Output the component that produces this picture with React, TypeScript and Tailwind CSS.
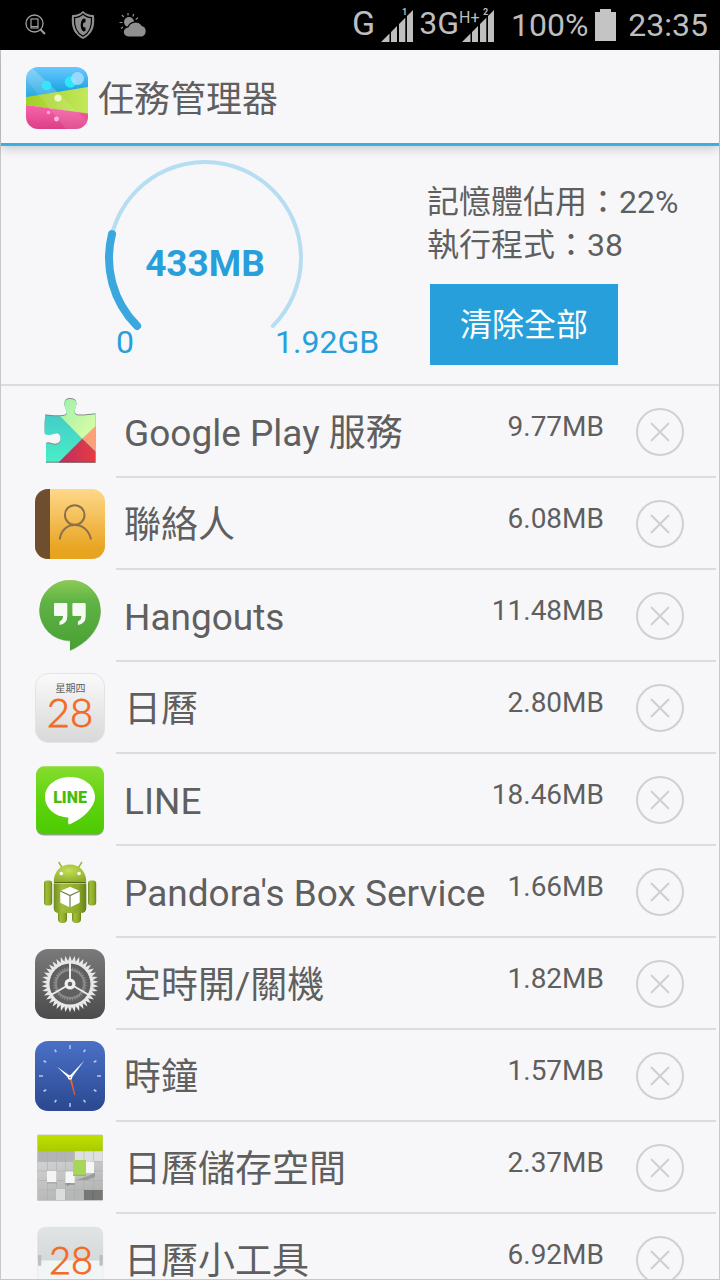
import type { ReactNode } from "react";

const PhoneSearchIcon = () => (
  <svg viewBox="0 0 22 22" className="w-[22px] h-[22px]" fill="none" stroke="#a0a0a0">
    <circle cx="9.5" cy="9.5" r="8.5" strokeWidth="1.3" />
    <rect x="6" y="5" width="7" height="9" strokeWidth="1.2" />
    <path d="M6 12.5h7" strokeWidth="1" />
    <path d="M15.5 15.5l4.500 4.500" strokeWidth="2" />
  </svg>
);

const ShieldIcon = () => (
  <svg viewBox="0 0 24 30" className="w-6 h-[30px]">
    <path d="M12 1.500C9 4.500 5 5.500 1.500 5.500C0.500 15 2 24 12 28.500C22 24 23.500 15 22.500 5.500C19 5.500 15 4.500 12 1.500Z" fill="#8f8f8f" stroke="#a5a5a5" strokeWidth="0.8" />
    <path d="M12 4C9.500 6.500 6.500 7.500 3.500 7.600C3 16 4.500 22.500 12 26.300C19.500 22.500 21 16 20.500 7.600C17.500 7.500 14.500 6.500 12 4Z" fill="none" stroke="#000" strokeWidth="1.2" />
    <path d="M14.500 9l-2-0.500C8.800 10 8.800 20 12.500 21.500l2-0.500v-3.400l-2-0.400c-0.700-1.200-0.700-3.500 0-4.500l2-0.500z" fill="#000" />
  </svg>
);

const WeatherIcon = () => (
  <svg viewBox="0 0 28 24" className="w-7 h-6">
    <g stroke="#8f8f8f" strokeWidth="1.2">
      <path d="M9 0v2.500M3 2l1.800 2.200M0.500 9.500h3M14.800 1l-1 2.500M19 4.800l-2.300 1.600M2 15.500l2-1.500" />
    </g>
    <circle cx="10" cy="9" r="5" fill="#8f8f8f" />
    <path d="M9.500 24a5 5 0 0 1-0.500-10a8 8 0 0 1 14-1.500a6 6 0 0 1 0 11.500z" fill="#8f8f8f" stroke="#000" strokeWidth="1.200" />
  </svg>
);

const SignalBars = () => (
  <path d="M0 32L8.500 23.500V32zM10 22L16 16V32H10zM18 14L24.300 7.700V32H18zM26 6L32 0V32H26z" fill="#bebebe" />
);

const StatusBar = () => {
  return (
    <div className="bg-black w-full h-[50px] shrink-0 flex justify-between items-center pl-[25px] pr-3 text-[#bebebe]">
      <div className="flex items-center gap-6">
        <PhoneSearchIcon />
        <ShieldIcon />
        <WeatherIcon />
      </div>

      <div className="flex items-center">
        <p className="text-[34px] leading-[34px] pb-1">G</p>
        <svg viewBox="0 0 34 36" className="w-[34px] h-9 ml-[6px]">
          <g transform="translate(0 3)">
            <SignalBars />
            <text x="21" y="5" fontSize="9" fontWeight="bold" fill="#bebebe">1</text>
          </g>
        </svg>
        <p className="text-[32px] leading-[34px] pb-1 ml-1">3G</p>
        <svg viewBox="0 0 36 36" className="w-9 h-9">
          <text x="0" y="16" fontSize="16" fill="#bebebe">H+</text>
          <g transform="translate(3 3)">
            <SignalBars />
            <text x="21" y="5" fontSize="9" fontWeight="bold" fill="#bebebe">2</text>
          </g>
        </svg>
        <p className="text-[32px] leading-[50px] ml-4">100%</p>
        <svg viewBox="0 0 22 32" className="w-[22px] h-8 ml-[7px]">
          <path d="M5 0h11v3h5v29H0V3h5z" fill="#c4c4c4" />
        </svg>
        <p className="text-[32px] leading-[50px] ml-[11px]">23:35</p>
      </div>
    </div>
  );
};

const Header = () => {
  return (
    <div className="relative shrink-0 flex items-center gap-[10px] h-24 pt-[2px] pl-[25px] border-b-[3px] border-[#3ab0e2] shadow-[0_3px_10px_rgba(0,0,0,0.18)]">
      <svg viewBox="0 0 62 62" className="w-[62px] h-[62px]">
        <defs>
          <clipPath id="logoClip"><rect width="62" height="62" rx="12" /></clipPath>
          <linearGradient id="logoBlue" x2="0" y2="1"><stop stopColor="#6bc8ff" /><stop offset="1" stopColor="#0099d8" /></linearGradient>
          <linearGradient id="logoGreen" x2="1" y2="0"><stop stopColor="#a3cf26" /><stop offset="1" stopColor="#c3e85c" /></linearGradient>
          <linearGradient id="logoPink" x2="0" y2="1"><stop stopColor="#f765ac" /><stop offset="1" stopColor="#dd3f85" /></linearGradient>
        </defs>
        <g clipPath="url(#logoClip)">
          <rect width="62" height="32" fill="url(#logoBlue)" />
          <path d="M0 30L62 20V47L0 38z" fill="url(#logoGreen)" />
          <path d="M0 38L62 46.500V62H0z" fill="url(#logoPink)" />
          <path d="M0 0H5L32 25L0 30z" fill="#fff" opacity="0.14" />
          <path d="M5 0L62 55V62H40L0 12V0z" fill="#fff" opacity="0.1" />
          <circle cx="20.500" cy="18.500" r="4.800" fill="#36e4fb" />
          <circle cx="44.500" cy="15" r="5.800" fill="#2ee6fb" />
          <circle cx="51.500" cy="11.500" r="6.500" fill="#b3e2ff" opacity="0.75" />
          <circle cx="32" cy="31" r="3.600" fill="#eef9c8" />
          <circle cx="22.500" cy="45.500" r="1.700" fill="#ffa9d3" />
          <circle cx="30.500" cy="52" r="2.400" fill="#ffb9da" />
        </g>
      </svg>
      <h1 className="text-[36px] leading-[48px] pt-1">任務管理器</h1>
    </div>
  );
};

const ARC = "M38.100 176.900A96 96 0 1 1 173.900 176.900";

const MemoryGauge = ({ percent }: { percent: number }) => (
  <svg viewBox="0 0 284 214" className="w-[284px] h-[214px] shrink-0" fill="none" strokeLinecap="round">
    <path d={ARC} stroke="#b6ddf1" strokeWidth="4" />
    <path d={ARC} pathLength="100" strokeDasharray={`${percent} 200`} stroke="#3aa8de" strokeWidth="8" />
    <g fill="#279fda" stroke="none">
      <text x="106" y="127" textAnchor="middle" fontSize="37" fontWeight="bold">433MB</text>
      <text x="17" y="204" fontSize="32">0</text>
      <text x="176" y="204" fontSize="32">1.92GB</text>
    </g>
  </svg>
);

const Summary = () => {
  return (
    <div className="shrink-0 flex items-start gap-11 h-60 pl-[98px] border-b-2 border-[#dcdcdc]">
      <div className="pt-[3px]">
        <MemoryGauge percent={22} />
      </div>
      <div className="pt-[35px]">
        <p className="text-[32px] leading-[43px] whitespace-nowrap">記憶體佔用：22%</p>
        <p className="text-[32px] leading-[43px] whitespace-nowrap">執行程式：38</p>
        <button className="mt-[17px] ml-[3px] h-[81px] px-[30px] bg-[#279fda] text-white text-[32px]">
          清除全部
        </button>
      </div>
    </div>
  );
};

const AppIcon = ({ children }: { children: ReactNode }) => (
  <svg viewBox="0 0 70 70" className="w-[70px] h-[70px] shrink-0 overflow-visible">
    {children}
  </svg>
);

const PlayServicesIcon = () => (
  <AppIcon>
    <defs>
      <clipPath id="puzzle">
        <path d="M10.300 18.300C18 19.600 24 19.500 28.500 18.900C32.500 18.300 32.700 15.500 30.700 12C28.700 8 28.500 2 35 2C41.700 2 42.500 7 40.300 11.500C38.600 15.500 39.500 18 43.500 18.500C49 18.800 55 17.700 60.500 17.200V65.500H11V48C11 46.300 13 45.800 16.500 47C22 48.900 25.700 46.500 25.700 42C25.700 37.300 22.500 35.300 18.500 37C15.500 38.300 12 38 9.800 37.200C9.300 30 9.700 24 10.300 18.300z" />
      </clipPath>
      <linearGradient id="playTeal" x2="0" y2="1"><stop stopColor="#43bfc9" /><stop offset="1" stopColor="#48f2c7" /></linearGradient>
      <linearGradient id="playGreen" x2="1" y2="1"><stop stopColor="#9ef0a8" /><stop offset="1" stopColor="#e0ffa5" /></linearGradient>
      <linearGradient id="playRed"><stop stopColor="#b92f62" /><stop offset="1" stopColor="#e83c41" /></linearGradient>
    </defs>
    <g transform="translate(0 -1)" opacity="0.75"><rect width="70" height="66" fill="#6b5b5b" clipPath="url(#puzzle)" /></g>
    <g clipPath="url(#puzzle)">
      <rect width="70" height="70" fill="url(#playTeal)" />
      <path d="M25 19V0H61V29.300L47.300 41.700z" fill="url(#playGreen)" />
      <path d="M61 28.500V55L47.300 41.700z" fill="#ffa178" />
      <path d="M47.300 41.700L61 55V66H23z" fill="url(#playRed)" />
      <path d="M11 65.300H61" stroke="#6d3548" strokeWidth="1" />
    </g>
  </AppIcon>
);

const ContactsIcon = () => (
  <AppIcon>
    <defs>
      <clipPath id="contactsClip"><rect width="70" height="70" rx="13" /></clipPath>
      <linearGradient id="contactsBg" x2="0" y2="1"><stop stopColor="#ffd88a" /><stop offset="0.85" stopColor="#e8a522" /><stop offset="1" stopColor="#e6a31e" /></linearGradient>
    </defs>
    <g clipPath="url(#contactsClip)">
      <rect width="70" height="70" fill="url(#contactsBg)" />
      <rect width="15" height="70" fill="#6d4f30" />
    </g>
    <g fill="none" stroke="#8b704b" strokeWidth="2">
      <circle cx="39.700" cy="26" r="9.800" />
      <path d="M24.700 50.500C26 41 32 36 39.700 36C47.500 36 54 41 56 50.500" />
    </g>
  </AppIcon>
);

const HangoutsIcon = () => (
  <AppIcon>
    <defs>
      <linearGradient id="hangoutsBg" x2="0" y2="1"><stop stopColor="#8ccb55" /><stop offset="0.3" stopColor="#60b346" /><stop offset="1" stopColor="#47a033" /></linearGradient>
    </defs>
    <path d="M35 -1A31 31 0 0 1 65.800 29.500C65.800 50 50 64 35 70V60.500A31 31 0 0 1 4.200 29.500A31 31 0 0 1 35 -1z" fill="#88a27c" opacity="0.5" />
    <path d="M35 -1A30.700 30.500 0 0 1 65.700 29.500C65.700 49 50 63 35 69.500V59.800A30.700 30.500 0 0 1 4.300 29.500A30.700 30.500 0 0 1 35 -1z" fill="url(#hangoutsBg)" />
    <path d="M20 22H31.300Q32.300 22 32.300 23V35Q32.300 43 24.500 44V40.500Q28 39 28 35H20Q19 35 19 34V23Q19 22 20 22zM38.400 22H49.700Q50.700 22 50.700 23V35Q50.700 43 42.900 44V40.500Q46.400 39 46.400 35H38.400Q37.400 35 37.400 34V23Q37.400 22 38.400 22z" fill="#f7faf4" />
  </AppIcon>
);

const CalendarIcon = () => (
  <AppIcon>
    <defs>
      <linearGradient id="calendarBg" x2="0" y2="1"><stop stopColor="#fafafa" /><stop offset="1" stopColor="#d8d8d8" /></linearGradient>
    </defs>
    <rect x="0.500" y="0.500" width="69" height="69" rx="13" fill="url(#calendarBg)" stroke="#e3e3e3" />
    <text x="35.500" y="19" textAnchor="middle" fontSize="10" fill="#606060">星期四</text>
    <text x="35" y="54" textAnchor="middle" fontSize="40" fontWeight="300" fontFamily="Lato" fill="#f26a25" stroke="#f26a25" strokeWidth="0.800">28</text>
  </AppIcon>
);

const LineIcon = () => (
  <AppIcon>
    <defs>
      <linearGradient id="lineBg" x2="0" y2="1"><stop stopColor="#86dd2e" /><stop offset="0.5" stopColor="#5fd30f" /><stop offset="1" stopColor="#4ccb02" /></linearGradient>
    </defs>
    <rect x="1" y="2.500" width="68" height="68" rx="8" fill="#777" opacity="0.7" />
    <rect x="1" y="1.300" width="68" height="68" rx="8" fill="url(#lineBg)" />
    <path d="M35 12C49 12 60 20.500 60 32C60 43 46 55 34.500 59.300C32.500 59.800 33.500 55 33.300 52.500C20 52 10 43 10 32C10 20.500 21 12 35 12z" fill="#fff" />
    <text x="35" y="37.500" textAnchor="middle" fontSize="16" fontWeight="900" fill="#45bd0c">LINE</text>
  </AppIcon>
);

const AndroidIcon = () => (
  <AppIcon>
    <defs>
      <radialGradient id="androidHead" cx="0.45" cy="0.35" r="0.75"><stop stopColor="#c5df55" /><stop offset="1" stopColor="#8cab28" /></radialGradient>
      <linearGradient id="androidBody"><stop stopColor="#718d20" /><stop offset="0.25" stopColor="#a1bd3a" /><stop offset="0.75" stopColor="#8ca928" /><stop offset="1" stopColor="#66801a" /></linearGradient>
    </defs>
    <path d="M23.700 5L27 10.500M47 5L43.500 10.500" stroke="#9cb646" strokeWidth="1.500" />
    <path d="M18.700 24.500C19 14 26 7.500 35 7.500C44 7.500 51 14 51.300 24.500z" fill="url(#androidHead)" />
    <circle cx="26.300" cy="16.500" r="1.800" fill="#fff" />
    <circle cx="44" cy="16.500" r="1.800" fill="#fff" />
    <rect x="9" y="23.500" width="8.200" height="25" rx="3" fill="url(#androidBody)" />
    <rect x="53" y="23.500" width="8.200" height="25" rx="3" fill="url(#androidBody)" />
    <rect x="23" y="50" width="9" height="16" rx="4" fill="url(#androidBody)" />
    <rect x="37" y="50" width="9" height="16" rx="4" fill="url(#androidBody)" />
    <path d="M18.700 26.500H51.300V51Q51.300 56 46 56H24Q18.700 56 18.700 51z" fill="url(#androidBody)" />
    <path d="M19 25.300H51" stroke="#54691a" strokeWidth="1.500" />
    <path d="M35 29.700L44.700 34V45.700L35 50.500L25.300 45.700V34z" fill="#fff" />
    <path d="M25.300 34L35 38.500L44.700 34M35 38.500V50.500" stroke="#6f7f48" strokeWidth="1.200" fill="none" />
  </AppIcon>
);

const gearPoints = (teeth: number, inner: number, outer: number) =>
  Array.from({ length: teeth * 2 }, (_, i) => {
    const r = i % 2 ? inner : outer;
    const a = (Math.PI * i) / teeth - Math.PI / 2;
    return `${35 + r * Math.cos(a)},${35 + r * Math.sin(a)}`;
  }).join(" ");

const GearIcon = () => (
  <AppIcon>
    <defs>
      <linearGradient id="gearBg" x2="0" y2="1"><stop stopColor="#7a7a7a" /><stop offset="1" stopColor="#4b4b4b" /></linearGradient>
    </defs>
    <rect width="70" height="70" rx="13" fill="url(#gearBg)" />
    <polygon points={gearPoints(38, 23, 28.5)} fill="#e8e8e8" />
    <circle cx="35" cy="35" r="20.500" fill="#5f5f5f" />
    <polygon points={gearPoints(38, 14.5, 17.5)} fill="#8a8a8a" />
    <circle cx="35" cy="35" r="13" fill="#606060" />
    <path d="M35 35V13M35 35L16 46M35 35L54 46" stroke="#ececec" strokeWidth="2" />
    <circle cx="35" cy="35" r="5.500" fill="#f0f0f0" />
    <circle cx="35" cy="35" r="2.300" fill="#666" />
  </AppIcon>
);

const ClockIcon = () => (
  <AppIcon>
    <defs>
      <linearGradient id="clockBg" x2="0" y2="1"><stop stopColor="#4a70c6" /><stop offset="1" stopColor="#2b4890" /></linearGradient>
    </defs>
    <rect width="70" height="70" rx="13" fill="url(#clockBg)" />
    {Array.from({ length: 12 }, (_, i) => (
      <path
        key={i}
        d={i % 3 ? "M35 4.500V7.500" : "M35 4V8"}
        transform={`rotate(${i * 30} 35 35)`}
        stroke="#b5c7ee"
        strokeWidth={i % 3 ? 1.7 : 1.5}
      />
    ))}
    <path d="M34.300 36.500L39.200 54L40.200 53.700L36.300 36z" fill="#f0622b" />
    <path d="M22 25.700L34 37.500L36 35.500z" fill="#fff" />
    <path d="M49.300 19.500L33.800 35.700L36.200 37.500z" fill="#fff" />
    <circle cx="35" cy="36.500" r="2.200" fill="#fff" />
    <circle cx="35" cy="36.500" r="0.800" fill="#777" />
  </AppIcon>
);

const CalendarStorageIcon = () => (
  <AppIcon>
    <defs>
      <linearGradient id="storageBg" x2="0.300" y2="1"><stop stopColor="#e2e2e2" /><stop offset="1" stopColor="#b5b7b6" /></linearGradient>
      <linearGradient id="storageTop" x2="0" y2="1"><stop stopColor="#c0e000" /><stop offset="1" stopColor="#a9cb00" /></linearGradient>
    </defs>
    <rect x="2" y="1.500" width="66" height="66.500" rx="1.500" fill="#c9c9c9" />
    <rect x="2.700" y="2" width="65" height="65" rx="1" fill="url(#storageBg)" />
    <rect x="2.700" y="18" width="37" height="10.500" fill="#b2b4b5" />
    <rect x="39.500" y="18" width="28" height="10.500" fill="#dedfe0" />
    <path d="M12.500 18V67M21.500 18V67M30.500 18V67M39.500 18V67M49 18V67M58.500 18V67M2.700 28.500H67.700M2.700 38H67.700M2.700 47.500H67.700M2.700 57H67.700" stroke="#a9abab" strokeWidth="0.500" />
    <rect x="49" y="57" width="18.700" height="10" fill="#767876" />
    <path d="M58 57v10" stroke="#666" strokeWidth="0.700" />
    <path d="M50 44L60 40V44L52 47H40L32 54V50z" fill="#777" opacity="0.5" />
    <rect x="12" y="39" width="10" height="11.500" fill="#999" opacity="0.6" />
    <rect x="12" y="38" width="9.500" height="11" fill="#f4f4f4" />
    <rect x="30" y="39" width="10" height="13" fill="#8a8a8a" opacity="0.6" />
    <rect x="30.300" y="38.500" width="9.500" height="11.500" fill="#f6f6f6" />
    <rect x="51" y="28.500" width="8" height="11.500" fill="#f6f6f6" />
    <rect x="21" y="56" width="9" height="11" fill="#dcdcdc" />
    <rect x="38" y="27" width="13" height="15.500" fill="#a9d65a" />
    <path d="M38 42.300H51" stroke="#8ac800" strokeWidth="1" />
    <rect x="2.700" y="2" width="65" height="16.300" rx="1" fill="url(#storageTop)" />
  </AppIcon>
);

const CalendarWidgetIcon = () => (
  <AppIcon>
    <defs>
      <linearGradient id="widgetTop" x2="0" y2="1"><stop stopColor="#e1e4e5" /><stop offset="1" stopColor="#d6d9da" /></linearGradient>
    </defs>
    <rect x="2.500" y="2" width="65.500" height="66" rx="8" fill="#f1f5f6" stroke="#e2e4e5" strokeWidth="0.500" />
    <path d="M2.500 35.500V10Q2.500 2 10.500 2H60Q68 2 68 10V35.500z" fill="url(#widgetTop)" />
    <rect x="3" y="30" width="3.300" height="10.700" fill="#bbbfc0" />
    <rect x="64.500" y="30" width="3.300" height="10.700" fill="#bbbfc0" />
    <text x="36" y="49" textAnchor="middle" fontSize="38" fontWeight="300" fontFamily="Lato" fill="#f26a25" stroke="#f26a25" strokeWidth="0.800">28</text>
  </AppIcon>
);

const apps = [
  { name: "Google Play 服務", size: "9.77MB", icon: <PlayServicesIcon /> },
  { name: "聯絡人", size: "6.08MB", icon: <ContactsIcon /> },
  { name: "Hangouts", size: "11.48MB", icon: <HangoutsIcon /> },
  { name: "日曆", size: "2.80MB", icon: <CalendarIcon /> },
  { name: "LINE", size: "18.46MB", icon: <LineIcon /> },
  { name: "Pandora's Box Service", size: "1.66MB", icon: <AndroidIcon /> },
  { name: "定時開/關機", size: "1.82MB", icon: <GearIcon /> },
  { name: "時鐘", size: "1.57MB", icon: <ClockIcon /> },
  { name: "日曆儲存空間", size: "2.37MB", icon: <CalendarStorageIcon /> },
  { name: "日曆小工具", size: "6.92MB", icon: <CalendarWidgetIcon /> },
];

const App = () => {
  return (
    <div
      lang="zh-Hant"
      className="h-screen w-full flex flex-col overflow-hidden bg-[#f7f7fa] text-[#5f5f5f] font-['Roboto','Noto_Sans_CJK_TC',sans-serif]"
    >
      <StatusBar />
      <div className="flex-1 min-h-0 flex flex-col border-x border-b border-[#c8c8c8]">
        <Header />
        <Summary />
        <ul className="flex-1 min-h-0 overflow-y-auto [scrollbar-width:none]">
          {apps.map((app) => (
            <li key={app.name} className="flex items-center gap-[11px] h-[92px] pl-[34px] pr-[3px]">
              {app.icon}
              <div className="flex-1 min-w-0 h-full flex items-center pt-[2px] pl-2 pr-8 border-b-2 border-[#dcdcdc]">
                <p className="flex-1 min-w-0 whitespace-nowrap text-[37px] leading-[48px] pt-1">{app.name}</p>
                <p className="text-[28px] leading-[32px] pb-[10px]">{app.size}</p>
                <button
                  aria-label={`關閉 ${app.name}`}
                  className="ml-8 w-12 h-12 shrink-0 rounded-full border-2 border-[#d0d0d0] flex items-center justify-center"
                >
                  <svg viewBox="0 0 20 20" className="w-5 h-5" stroke="#cfcfcf" strokeWidth="2">
                    <path d="M1 1L19 19M19 1L1 19" />
                  </svg>
                </button>
              </div>
            </li>
          ))}
        </ul>
      </div>
    </div>
  );
};

export default App;
